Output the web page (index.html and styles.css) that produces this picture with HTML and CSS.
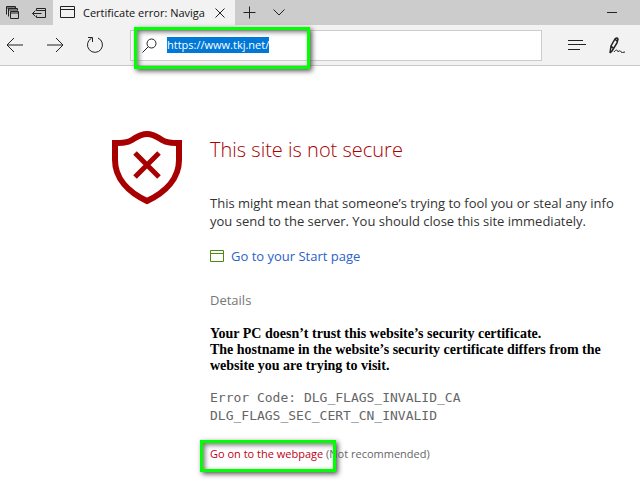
FILE: index.html
```html
<!DOCTYPE html>
<html lang="en">
<head>
    <meta charset="UTF-8">
    <meta name="viewport" content="width=device-width, initial-scale=1.0">
    <title>Certificate error: Navigation blocked</title>
    <link rel="stylesheet" href="styles.css">
</head>
<body>
    <header class="browser">
        <div class="tab-bar">
            <button class="icon-button tabs-button" aria-label="Tabs set aside">
                <svg width="14" height="14" viewBox="0 0 14 14"><path d="M.5 8.500V.5h9v2M.5 2h9M2.500 10.500v-8h9v2M2.500 4h9M4.500 5.500h8v7h-8zM4.500 7h8"/></svg>
            </button>
            <button class="icon-button tabs-button" aria-label="Set tabs aside">
                <svg width="15" height="12" viewBox="0 0 15 12"><path d="M4.500 3.500v-2h9v9h-9v-2M4.500 3.500h9M.5 6.500h9M3.500 3.500l-3 3 3 3"/></svg>
            </button>
            <div class="tab">
                <svg width="15" height="13" viewBox="0 0 15 13"><path d="M.5.5h14v11H.5zM.5 3.500h14"/></svg>
                <span class="tab-title">Certificate error: Naviga</span>
                <button class="icon-button" aria-label="Close tab">
                    <svg width="10" height="10" viewBox="0 0 10 10"><path d="M.5.5l9 9M9.500.5l-9 9"/></svg>
                </button>
            </div>
            <button class="icon-button new-tab" aria-label="New tab">
                <svg width="13" height="13" viewBox="0 0 13 13"><path d="M6.500.5v12M.5 6.500h12"/></svg>
            </button>
            <button class="icon-button tab-list" aria-label="Tab previews">
                <svg width="12" height="7" viewBox="0 0 12 7"><path d="M.5.5L6 6 11.500.5"/></svg>
            </button>
            <button class="icon-button minimize" aria-label="Minimize">
                <svg width="10" height="3" viewBox="0 0 10 3"><path d="M0 1.500h10"/></svg>
            </button>
        </div>
        <div class="toolbar">
            <div class="nav-buttons">
                <button class="icon-button" aria-label="Back">
                    <svg width="18" height="16" viewBox="0 0 18 16"><path d="M17 8H1M8 1L1 8l7 7"/></svg>
                </button>
                <button class="icon-button" aria-label="Forward">
                    <svg width="18" height="16" viewBox="0 0 18 16"><path d="M1 8h16M10 1l7 7-7 7"/></svg>
                </button>
                <button class="icon-button" aria-label="Refresh">
                    <svg width="18" height="18" viewBox="0 0 18 18"><path d="M12 2a7.500 7.500 0 1 1-6.500.2M2 1.500h4.500V6"/></svg>
                </button>
            </div>
            <div class="address-bar">
                <svg width="15" height="15" viewBox="0 0 15 15"><circle cx="9.500" cy="5.500" r="4.500"/><path d="M6.300 8.700L.5 14.500"/></svg>
                <input class="address" id="address" type="text" value="https://www.tkj.net/" aria-label="Address" spellcheck="false">
                <span class="marker marker-address"></span>
            </div>
            <div class="tools">
                <button class="icon-button" aria-label="Hub">
                    <svg width="18" height="12" viewBox="0 0 18 12"><path d="M0 1.500h15M0 5.500h18M0 10.500h12"/></svg>
                </button>
                <button class="icon-button" aria-label="Make a web note">
                    <svg width="16" height="17" viewBox="0 0 16 17"><path class="nib" d="M1 16L2 9 6 2q2-2 3 0L8 6 3 14 1 16M2 9l2 2M6 2l2 2"/><path d="M5 15c2-3 4-2 4 0 1-2 3-1 3 0q1 1 4 0"/></svg>
                </button>
            </div>
        </div>
    </header>

    <main class="page">
        <svg class="shield" width="70" height="74" viewBox="0 0 70 74">
            <path d="M35 3C28 3 25 6 20 9 15 12 10 12 3 12v17c0 18 13 32 32 41 19-9 32-23 32-41V12c-7 0-12 0-17-3C45 6 42 3 35 3z"/>
            <path class="cross" d="M23 22l24 24M47 22L23 46"/>
        </svg>
        <div class="message">
            <h1>This site is not secure</h1>
            <p class="summary">This might mean that someone’s trying to fool you or steal any info<br>you send to the server. You should close this site immediately.</p>
            <a class="start-link" href="#">
                <svg width="14" height="12" viewBox="0 0 14 12"><path d="M.5.5h13v11H.5zM.5 3.500h13"/></svg>
                Go to your Start page
            </a>
            <h2>Details</h2>
            <p class="reason">Your PC doesn’t trust this website’s security certificate.<br>The hostname in the website’s security certificate differs from the<br>website you are trying to visit.</p>
            <p class="error-code">Error Code: DLG_FLAGS_INVALID_CA<br>DLG_FLAGS_SEC_CERT_CN_INVALID</p>
            <p class="proceed"><a href="#">Go on to the webpage<span class="marker marker-proceed"></span></a> (Not recommended)</p>
        </div>
    </main>

    <script>
        const address = document.getElementById('address');
        address.focus();
        address.select();
    </script>
</body>
</html>
```
FILE: styles.css
```css
body {
    margin: 0;
    background-color: #fff;
    font-family: "Open Sans", "Noto Sans", sans-serif;
    font-size: 13px;
    color: #333;
}
svg {
    display: block;
    flex: none;
    fill: none;
    stroke: #222;
}
.icon-button {
    display: flex;
    justify-content: center;
    align-items: center;
    padding: 0;
    border: none;
    background: none;
}
.tab-bar {
    display: flex;
    height: 25px;
    background-color: #ccc;
}
.tabs-button {
    width: 26px;
}
.tab {
    display: flex;
    align-items: center;
    gap: 8px;
    box-sizing: border-box;
    width: 182px;
    margin-left: 1px;
    padding: 0 10px 0 7px;
    background-color: #f2f2f2;
}
.tab-title {
    flex: 1;
    font-size: 11px;
    line-height: 16px;
    white-space: nowrap;
    color: #111;
}
.new-tab,
.tab-list {
    width: 29px;
}
.minimize {
    width: 56px;
    margin-left: auto;
}
.toolbar {
    display: flex;
    align-items: center;
    height: 40px;
    border-bottom: 1px solid #c8c8c8;
    background-color: #f2f2f2;
}
.nav-buttons {
    display: flex;
    gap: 22px;
    padding: 0 26px 0 6px;
}
.address-bar {
    position: relative;
    display: flex;
    flex: 1;
    align-items: center;
    gap: 10px;
    box-sizing: border-box;
    height: 31px;
    padding-left: 11px;
    border: 1px solid #ccc;
    background-color: #fff;
}
.address {
    flex: 1;
    min-width: 0;
    height: 16px;
    padding: 0;
    border: none;
    outline: none;
    font-family: inherit;
    font-size: 11px;
    line-height: 16px;
    background: none;
}
.address::selection {
    background-color: #0078d7;
    color: #fff;
}
.tools {
    display: flex;
    align-items: center;
    gap: 23px;
    padding: 0 15px 0 26px;
}
.nib {
    stroke-width: 1.5;
}

/* green highlight boxes */
.marker {
    position: absolute;
    box-sizing: border-box;
    border: 3px solid #0f0;
    box-shadow: 2px 2px 5px #555, inset 2px 2px 5px #777;
    pointer-events: none;
}
.marker-address {
    top: -4px;
    left: 3px;
    width: 176px;
    height: 42px;
}
.marker-proceed {
    top: -6px;
    left: -10px;
    width: 136px;
    height: 32px;
}

.page {
    display: flex;
    align-items: flex-start;
    gap: 28px;
    padding: 65px 16px 20px 112px;
}
.shield {
    stroke: #a80000;
    stroke-width: 6;
}
.cross {
    stroke-width: 5;
}
.message {
    flex: 1;
    white-space: nowrap;
}
h1,
h2,
p {
    margin: 0;
}
h1 {
    margin-top: 4px;
    font-size: 20px;
    font-weight: 300;
    line-height: 30px;
    color: #a80000;
}
.summary {
    margin-top: 29px;
    line-height: 18px;
}
.start-link {
    display: flex;
    align-items: center;
    gap: 7px;
    margin-top: 17px;
    line-height: 18px;
    color: #2a62c9;
    text-decoration: none;
}
.start-link svg {
    stroke: #4f8a10;
}
h2 {
    margin-top: 26px;
    font-size: 13px;
    font-weight: 400;
    line-height: 18px;
    color: #767676;
}
.reason {
    margin-top: 17px;
    font-family: "Liberation Serif", serif;
    font-size: 14px;
    font-weight: 700;
    line-height: 16px;
    color: #000;
}
.error-code {
    margin-top: 15px;
    font-family: "DejaVu Sans Mono", monospace;
    font-size: 13px;
    line-height: 18px;
    color: #666;
}
.proceed {
    margin-top: 20px;
    font-size: 11px;
    line-height: 18px;
    color: #666;
}
.proceed a {
    position: relative;
    color: #c00018;
    text-decoration: none;
}
```
